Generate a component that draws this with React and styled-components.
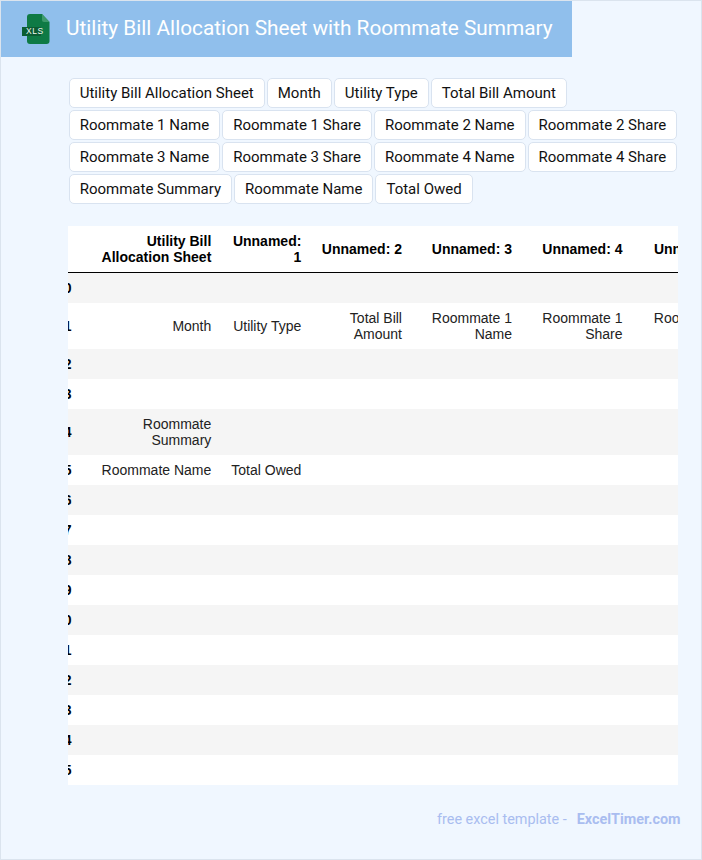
import React from "react";
import styled, { createGlobalStyle } from "styled-components";

const Global = createGlobalStyle`
  html, body { margin: 0; padding: 0; }
  body { background: #f0f7ff; font-family: Roboto, "Liberation Sans", sans-serif; }
`;

const Page = styled.div`
  box-sizing: border-box;
  width: 702px;
  height: 860px;
  border: 1px solid #dbe4ee;
  background: #f0f7ff;
  display: flex;
  flex-direction: column;
  overflow: hidden;
`;

const Banner = styled.header`
  box-sizing: border-box;
  width: 571px;
  height: 57px;
  margin-top: -1px;
  padding: 0 0 1px 20px;
  background: #90bfec;
  display: flex;
  align-items: center;
  gap: 13px;
  flex: none;
`;

const IconMark = styled.svg`
  display: block;
  flex: none;
  margin-top: 1px;
`;

const Title = styled.h1`
  margin: 0;
  font: 400 20.8px/24px Roboto, sans-serif;
  color: #fff;
  white-space: nowrap;
`;

const Content = styled.main`
  box-sizing: border-box;
  width: 610px;
  margin: 21px 0 0 67px;
`;

const Chips = styled.div`
  display: flex;
  flex-wrap: wrap;
  gap: 2px;
  padding-left: 0.7px;
`;

const Chip = styled.span`
  box-sizing: border-box;
  height: 30px;
  padding: 0 10px;
  display: flex;
  align-items: center;
  background: #fff;
  border: 1px solid #d9e3f0;
  border-radius: 5px;
  font: 400 15px/18px Roboto, sans-serif;
  color: #111;
  white-space: nowrap;
`;

const TableClip = styled.div`
  margin-top: 22px;
  overflow: hidden;
  background: #fff;
`;

const Table = styled.table`
  table-layout: fixed;
  width: 703px;
  margin-left: -27px;
  border-collapse: collapse;
  font: 400 14px/16px "Liberation Sans", Arial, sans-serif;
  color: #222;

  tbody tr:nth-child(odd) { background: #f5f5f5; }
  tbody tr:nth-child(even) { background: #fff; }
`;

const Head = styled.th`
  padding: 7px 10px;
  text-align: right;
  font-weight: 700;
  color: #000;
  border-bottom: 1px solid #000;
`;

const RowHead = styled.th`
  padding: 7px 9.5px 7px 10px;
  text-align: right;
  font-weight: 700;
  color: #000;
`;

const Cell = styled.td`
  padding: 7px 10px;
  text-align: right;
`;

const Credit = styled.footer`
  margin: 26px 20.5px 0 0;
  display: flex;
  justify-content: flex-end;
  gap: 10px;
  font: 400 14.4px/18px Roboto, sans-serif;
  color: #a9bdf0;
`;

const CreditLink = styled.strong`
  font-weight: 700;
`;

const XlsIcon = () => (
  <IconMark width="32" height="33" viewBox="0 0 32 33" aria-hidden="true">
    <path d="M9 2h12l7.5 8v19a3 3 0 0 1-3 3H9a3 3 0 0 1-3-3V5a3 3 0 0 1 3-3z" fill="#0e7a45" />
    <path d="M21 2l7.5 8H23a2 2 0 0 1-2-2z" fill="#3d9a6c" />
    <rect x="1" y="15" width="19" height="9" fill="#0b5d33" />
    <text x="5" y="22.3" fontFamily="'Liberation Sans', sans-serif" fontSize="8.5" letterSpacing="0.5" fill="#f1f8f3">XLS</text>
  </IconMark>
);

const chips = [
  "Utility Bill Allocation Sheet", "Month", "Utility Type", "Total Bill Amount",
  "Roommate 1 Name", "Roommate 1 Share", "Roommate 2 Name", "Roommate 2 Share",
  "Roommate 3 Name", "Roommate 3 Share", "Roommate 4 Name", "Roommate 4 Share",
  "Roommate Summary", "Roommate Name", "Total Owed",
];

const widths = [40, 140.3, 90.05, 100.65, 110, 110.5, 111.5];
const headers = ["Utility Bill Allocation Sheet", "Unnamed: 1", "Unnamed: 2", "Unnamed: 3", "Unnamed: 4", "Unnamed: 5"];

const rows = Array.from({ length: 16 }, () => ["", "", "", "", "", ""]);
rows[1] = ["Month", "Utility Type", "Total Bill Amount", "Roommate 1 Name", "Roommate 1 Share", "Roommate 2 Name"];
rows[4] = ["Roommate Summary", "", "", "", "", ""];
rows[5] = ["Roommate Name", "Total Owed", "", "", "", ""];

export default function App() {
  return (
    <Page>
      <Global />
      <Banner>
        <XlsIcon />
        <Title>Utility Bill Allocation Sheet with Roommate Summary</Title>
      </Banner>
      <Content>
        <Chips>
          {chips.map((c) => <Chip key={c}>{c}</Chip>)}
        </Chips>
        <TableClip>
          <Table>
            <colgroup>
              {widths.map((w, i) => <col key={i} style={{ width: w }} />)}
            </colgroup>
            <thead>
              <tr>
                <Head />
                {headers.map((h) => <Head key={h}>{h}</Head>)}
              </tr>
            </thead>
            <tbody>
              {rows.map((r, i) => (
                <tr key={i}>
                  <RowHead>{i}</RowHead>
                  {r.map((v, j) => <Cell key={j}>{v || "\u00a0"}</Cell>)}
                </tr>
              ))}
            </tbody>
          </Table>
        </TableClip>
      </Content>
      <Credit>
        <span>free excel template -</span>
        <CreditLink>ExcelTimer.com</CreditLink>
      </Credit>
    </Page>
  );
}
